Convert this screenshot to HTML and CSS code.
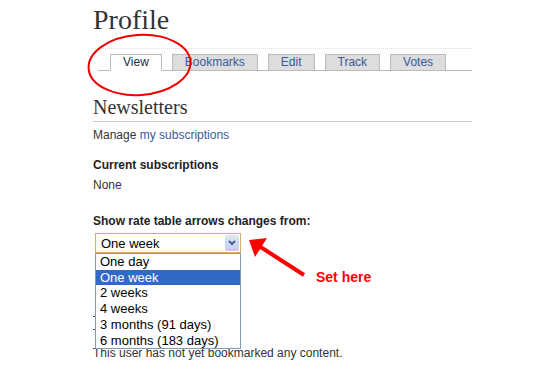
FILE: index.html
```html
<!DOCTYPE html>
<html lang="en">
<head>
    <meta charset="UTF-8">
    <meta name="viewport" content="width=device-width, initial-scale=1.0">
    <title>Profile</title>
    <link rel="stylesheet" href="styles.css">
</head>
<body>
    <div class="page">
        <h1 class="page-title">Profile</h1>

        <!-- Profile tabs -->
        <div class="tab-bar">
            <ul class="tabs">
                <li class="tab active"><a href="#">View</a></li>
                <li class="tab"><a href="#">Bookmarks</a></li>
                <li class="tab"><a href="#">Edit</a></li>
                <li class="tab"><a href="#">Track</a></li>
                <li class="tab"><a href="#">Votes</a></li>
            </ul>
        </div>

        <h2 class="section-title">Newsletters</h2>
        <p class="line manage">Manage <a href="#">my subscriptions</a></p>

        <h3 class="label current">Current subscriptions</h3>
        <p class="line none">None</p>

        <form class="rate-form">
            <label class="label rate-label">Show rate table arrows changes from:</label>
            <div class="select-wrap">
                <div class="select">
                    <span class="select-value">One week</span>
                    <span class="select-btn">
                        <svg width="8" height="6" viewBox="0 0 8 6">
                            <path d="M1 1 L4 4 L7 1" fill="none" stroke="#4d6185" stroke-width="2"/>
                        </svg>
                    </span>
                </div>
                <!-- opened dropdown -->
                <ul class="select-list">
                    <li>One day</li>
                    <li class="selected">One week</li>
                    <li>2 weeks</li>
                    <li>4 weeks</li>
                    <li>3 months (91 days)</li>
                    <li>6 months (183 days)</li>
                </ul>
            </div>
        </form>

        <!-- mostly hidden behind the open dropdown -->
        <div class="bookmark-mark"></div>
        <p class="line empty">This user has not yet bookmarked any content.</p>
    </div>

    <!-- Red annotations drawn over the page -->
    <svg class="annotations" width="550" height="366" viewBox="0 0 550 366">
        <ellipse cx="139.5" cy="65" rx="51" ry="30" fill="none" stroke="#e00" stroke-width="2" transform="rotate(-4 139.5 65)"/>
        <line x1="304" y1="275" x2="259" y2="246" stroke="#f00" stroke-width="4"/>
        <polygon points="249,240 267,238 255,257" fill="#f00"/>
    </svg>
    <span class="note">Set here</span>
</body>
</html>
```

FILE: styles.css
```css
body {
    margin: 0;
    font-family: "Liberation Sans", Arial, sans-serif;
    font-size: 12px;
    color: #333;
    background: #fff;
}

a {
    color: #3b5b98;
    text-decoration: none;
}

.page {
    width: 379px;
    margin-left: 93px;
}

.page-title {
    margin: 0;
    padding-top: 4px;
    font-family: "Liberation Serif", Georgia, serif;
    font-size: 28px;
    font-weight: normal;
    line-height: 32px;
    color: #333;
}

/* Tabs */
.tab-bar {
    margin-top: 12px;
    padding-top: 5px;
    border-top: 1px dotted #ddd;
}

.tabs {
    display: flex;
    gap: 10px;
    list-style: none;
    margin: 0 0 0 5px;
    padding: 0 0 0 12px;
    border-bottom: 1px solid #bbb;
}

.tab {
    margin-bottom: -1px;
    padding: 0 12px;
    line-height: 15px;
    background: #ddd;
    border: 1px solid #bbb;
}

.tab a {
    color: #3a5a9a;
}

.tab.active {
    background: #fff;
    border-bottom-color: #fff;
}

.tab.active a {
    color: #1f2a44;
}

/* Sections */
.section-title {
    margin: 24px 0 6px;
    padding-bottom: 2px;
    font-family: "Liberation Serif", Georgia, serif;
    font-size: 20px;
    font-weight: normal;
    line-height: 24px;
    color: #333;
    border-bottom: 1px solid #ccc;
}

.line {
    margin: 0;
    line-height: 15px;
}

.label {
    display: block;
    margin: 0;
    font-size: 12px;
    font-weight: bold;
    line-height: 15px;
    color: #222;
}

.current {
    margin-top: 15px;
}

.none {
    margin-top: 5px;
}

.rate-form {
    margin: 21px 0 0;
}

/* Fake opened select */
.select-wrap {
    position: relative;
    z-index: 1;
    width: 146px;
    margin: 4px 0 0 2px;
}

.select {
    display: flex;
    align-items: center;
    justify-content: space-between;
    height: 20px;
    padding: 1px 1px 1px 5px;
    box-sizing: border-box;
    border: 1px solid #dcb060;
    font-size: 13px;
    color: #000;
}

.select-btn {
    display: flex;
    align-items: center;
    justify-content: center;
    width: 14px;
    height: 16px;
    border-radius: 2px;
    background: linear-gradient(#dde7fc, #bccdf3);
}

.select-list {
    position: absolute;
    top: 20px;
    left: 0;
    width: 146px;
    box-sizing: border-box;
    margin: 0;
    padding: 0;
    list-style: none;
    background: #fff;
    border: 1px solid #7f9db9;
    font-size: 13px;
    color: #000;
}

.select-list li {
    padding-left: 4px;
    line-height: 15.7px;
}

.select-list li.selected {
    background: #316ac5;
    color: #fff;
}

/* serif tips of a heading peeking out left of the dropdown */
.bookmark-mark {
    width: 3px;
    height: 12px;
    margin-top: 63px;
    border-top: 1px solid #555;
    border-bottom: 1px solid #555;
}

.empty {
    margin-top: 16px;
}

/* Annotations */
.annotations {
    position: absolute;
    left: 0;
    top: 0;
    z-index: 2;
    pointer-events: none;
}

.note {
    position: absolute;
    left: 316px;
    top: 269px;
    font-size: 14px;
    font-weight: bold;
    line-height: 16px;
    color: #f00;
}
```
